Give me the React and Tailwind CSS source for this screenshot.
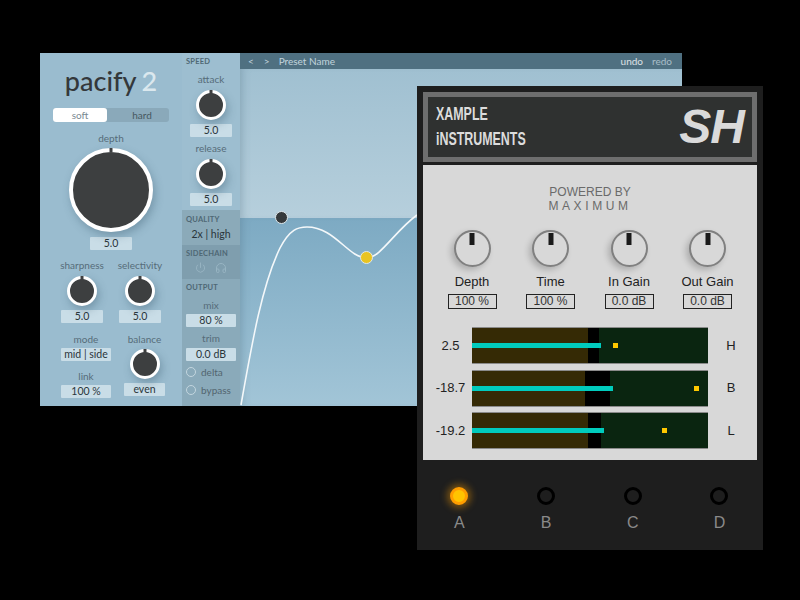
import { Power, Headphones } from 'lucide-react';

const Label = ({ children, className = '' }) => (
    <div className={`text-[10px] leading-[12px] text-[#566c79] text-center whitespace-nowrap ${className}`}>{children}</div>
);

const Value = ({ children, className = 'w-[42px]' }) => (
    <div className={`h-[13px] bg-[#c9dde7] rounded-[1px] text-[10.5px] leading-[13px] text-[#2a353b] text-center ${className}`}>{children}</div>
);

const Knob = ({ large }) => (
    <div className={`relative rounded-full border-white bg-[#3d3f40] shadow-[2px_4px_8px_rgba(50,80,100,0.35)] ${large ? 'w-[84px] h-[84px] border-[4px]' : 'w-[30px] h-[30px] border-[3px]'}`}>
        <div className={`absolute left-1/2 -translate-x-1/2 bg-[#3d3f40] ${large ? 'w-[3px] h-[4px] -top-[4px]' : 'w-[3px] h-[5px] -top-[3px]'}`}></div>
    </div>
);

const KnobBlock = ({ label, value, className = '' }) => (
    <div className={`w-[42px] flex flex-col items-center ${className}`}>
        <Label>{label}</Label>
        <div className="mt-[5px]"><Knob /></div>
        <Value className="w-[42px] mt-[4px] shrink-0">{value}</Value>
    </div>
);

const SectionTitle = ({ children }) => (
    <div className="text-[7.5px] leading-[10px] font-bold text-[#4f6875] tracking-[0.2px]">{children}</div>
);

const Radio = ({ label }) => (
    <div className="flex items-center gap-[5px] h-[12px]">
        <div className="w-[10px] h-[10px] rounded-full border-[1.5px] border-[#c3d6df]"></div>
        <span className="text-[10px] text-[#52656f]">{label}</span>
    </div>
);

const Pacify = () => (
    <div className="absolute left-[40px] top-[53px] w-[642px] h-[353px] flex font-['Lato',sans-serif] bg-[#9bbdcf]">
        <div className="w-[142px] shrink-0 flex flex-col items-center bg-[#9abccf] pt-[11px]">
            <div className="h-[34px] flex items-center gap-[5px] text-[27px] leading-[34px] font-medium text-[#34383b]">
                <span>pacify</span><span className="text-[#dbe8ee]">2</span>
            </div>
            <div className="mt-[10px] w-[116px] h-[14px] flex rounded-[3px] bg-[#8aa9ba] text-[10px] leading-[14px] text-center">
                <div className="w-[54px] bg-white rounded-[3px] text-[#7a8a92]">soft</div>
                <div className="flex-1 pl-[8px] text-[#46585f]">hard</div>
            </div>
            <Label className="mt-[10px]">depth</Label>
            <div className="mt-[4px]"><Knob large /></div>
            <Value className="w-[42px] mt-[5px]">5.0</Value>
            <div className="w-full px-[21px] mt-[9px] flex justify-between">
                <KnobBlock label="sharpness" value="5.0" />
                <KnobBlock label="selectivity" value="5.0" />
            </div>
            <div className="w-full pl-[21px] pr-[17px] mt-[10px] flex justify-between">
                <div className="flex flex-col items-center">
                    <Label>mode</Label>
                    <Value className="w-[50px] mt-[3px]">mid | side</Value>
                    <Label className="mt-[9px]">link</Label>
                    <Value className="w-[50px] mt-[3px]">100 %</Value>
                </div>
                <div className="flex flex-col items-center">
                    <Label>balance</Label>
                    <div className="mt-[4px]"><Knob /></div>
                    <Value className="w-[41px] mt-[4px]">even</Value>
                </div>
            </div>
        </div>

        <div className="w-[58px] shrink-0 flex flex-col shadow-[inset_4px_0_5px_-3px_rgba(60,90,110,0.35)]">
            <div className="h-[157px] px-[4px] pt-[4px] bg-[#9dbed0]">
                <SectionTitle>SPEED</SectionTitle>
                <KnobBlock label="attack" value="5.0" className="mt-[6px] mx-auto" />
                <KnobBlock label="release" value="5.0" className="mt-[5px] mx-auto" />
            </div>
            <div className="h-[35px] px-[4px] pt-[5px] bg-[#8baab9]">
                <SectionTitle>QUALITY</SectionTitle>
                <div className="text-[10.5px] leading-[14px] text-[#2a353b] text-center mt-[2px]">2x | high</div>
            </div>
            <div className="h-[34px] px-[4px] pt-[4px] bg-[#7f9eae]">
                <SectionTitle>SIDECHAIN</SectionTitle>
                <div className="flex justify-center gap-[9px] mt-[3px] text-[#98b5c3]">
                    <Power size={11} />
                    <Headphones size={12} />
                </div>
            </div>
            <div className="flex-1 px-[4px] pt-[4px] bg-[#8aaaba]">
                <SectionTitle>OUTPUT</SectionTitle>
                <Label className="mt-[6px]">mix</Label>
                <Value className="w-[50px] mt-[3px]">80 %</Value>
                <Label className="mt-[5px]">trim</Label>
                <Value className="w-[50px] mt-[4px]">0.0 dB</Value>
                <div className="mt-[5px] flex flex-col gap-[6px]">
                    <Radio label="delta" />
                    <Radio label="bypass" />
                </div>
            </div>
        </div>

        <div className="flex-1 flex flex-col relative">
            <div className="h-[16px] flex items-center px-[8px] bg-[#4f7081] text-[10px] text-[#c2d4dd]">
                <span>&lt;</span>
                <span className="ml-[10px]">&gt;</span>
                <span className="ml-[9px]">Preset Name</span>
                <span className="ml-auto mr-[1px] text-white/80">undo</span>
                <span className="ml-[8px] mr-[2px] text-[#a9bec8]">redo</span>
            </div>
            <div className="h-[149px] bg-gradient-to-b from-[#a0c0d1] to-[#b6cfdc] shadow-[inset_8px_0_8px_-6px_rgba(70,100,120,0.3)]"></div>
            <div className="flex-1 bg-gradient-to-b from-[#7daac3] to-[#a2c5d7] shadow-[inset_8px_0_8px_-6px_rgba(70,100,120,0.3)]"></div>
            <svg className="absolute left-0 top-0" width="442" height="353" viewBox="0 0 442 353" fill="none">
                <path d="M1 352 C12 290 22 232 40 195 C50 176 58 174 67 174 C95 174 108 205 127 205 C140 205 155 178 177 162" stroke="#f4f8fa" strokeWidth="1.6" />
            </svg>
            <div className="absolute left-[35px] top-[158px] w-[13px] h-[13px] rounded-full bg-[#35393b] border border-[#dfe8ec]"></div>
            <div className="absolute left-[120px] top-[198px] w-[13px] h-[13px] rounded-full bg-[#e9c421] border border-[#dfe8ec]"></div>
        </div>
    </div>
);

const GreyKnob = ({ label, value }) => (
    <div className="w-[50px] flex flex-col items-center">
        <div className="relative w-[37px] h-[37px] rounded-full border-2 border-[#808080] bg-[#d8d8d8] shadow-[-3px_3px_6px_rgba(0,0,0,0.2)]">
            <div className="absolute left-1/2 -translate-x-1/2 top-[1px] w-[5px] h-[12px] bg-[#1a1a1a]"></div>
        </div>
        <div className="mt-[7px] text-[13px] leading-[16px] text-[#222] whitespace-nowrap">{label}</div>
        <div className="mt-[4px] w-[49px] h-[15px] border-[1.5px] border-[#222] text-[12px] leading-[12px] text-[#333] text-center">{value}</div>
    </div>
);

const meters = [
    { num: '2.5', letter: 'H', brown: 116, gap: 11, bar: 129, peak: 141 },
    { num: '-18.7', letter: 'B', brown: 113, gap: 25, bar: 141, peak: 222 },
    { num: '-19.2', letter: 'L', brown: 116, gap: 13, bar: 132, peak: 190 },
];

const Meter = ({ num, letter, brown, gap, bar, peak }) => (
    <div className="flex items-center h-[37px]">
        <div className="w-[49px] pl-[6px] text-center text-[13px] text-[#222]">{num}</div>
        <div className="relative w-[236px] h-[37px] flex items-stretch border-y border-y-[#8a8a8a] bg-black">
            <div className="bg-[#352a05]" style={{ width: brown }}></div>
            <div style={{ width: gap }}></div>
            <div className="flex-1 bg-[#0a2510]"></div>
            <div className="absolute left-0 top-[15px] h-[5px] bg-[#00cbbd]" style={{ width: bar }}></div>
            <div className="absolute top-[15px] w-[5px] h-[5px] bg-[#ffc800]" style={{ left: peak }}></div>
        </div>
        <div className="flex-1 pr-[3px] text-center text-[13px] text-[#222]">{letter}</div>
    </div>
);

const Led = ({ label, on }) => (
    <div className="w-[86.7px] shrink-0 flex flex-col items-center">
        {on ? (
            <div className="w-[18px] h-[18px] rounded-full bg-[#ffc400] border-[3px] border-[#ff9d00] shadow-[0_0_7px_3px_rgba(255,160,0,0.4)]"></div>
        ) : (
            <div className="w-[18px] h-[18px] rounded-full border-[3px] border-black"></div>
        )}
        <div className="mt-[9px] text-[16px] leading-[18px] text-[#8a8a8a]">{label}</div>
    </div>
);

const Xample = () => (
    <div className="absolute left-[417px] top-[86px] w-[346px] h-[464px] bg-[#1e1e1e] px-[6px] pt-[6px] font-['Liberation_Sans',Arial,sans-serif]">
        <div className="h-[70px] border-[5px] border-[#6e6e6e] bg-[#2f3130] flex items-center justify-between pl-[8px] pr-[8px]">
            <div className="origin-left scale-x-[0.69] font-bold text-[18px] leading-[25px] text-[#dcdcdc]">
                <div>XAMPLE</div>
                <div>iNSTRUMENTS</div>
            </div>
            <div className="italic font-bold text-[48px] leading-[50px] text-[#dadada] tracking-[-1px]">SH</div>
        </div>
        <div className="mt-[3px] h-[295px] bg-[#d8d8d8] flex flex-col pt-[20px]">
            <div className="text-center text-[12px] leading-[14px] text-[#6a6a6a]">POWERED BY</div>
            <div className="text-center text-[12px] leading-[14px] text-[#6a6a6a] tracking-[3.6px]">MAXIMUM</div>
            <div className="flex mt-[17px] pl-[24px] gap-[28.5px]">
                <GreyKnob label="Depth" value="100 %" />
                <GreyKnob label="Time" value="100 %" />
                <GreyKnob label="In Gain" value="0.0 dB" />
                <GreyKnob label="Out Gain" value="0.0 dB" />
            </div>
            <div className="mt-[18px] flex flex-col gap-[5.5px]">
                {meters.map((m) => <Meter key={m.letter} {...m} />)}
            </div>
        </div>
        <div className="flex ml-[-7px] mt-[27px]">
            <Led label="A" on />
            <Led label="B" />
            <Led label="C" />
            <Led label="D" />
        </div>
    </div>
);

export default function App() {
    return (
        <div className="relative w-[800px] h-[600px] bg-black overflow-hidden">
            <Pacify />
            <Xample />
        </div>
    );
}
